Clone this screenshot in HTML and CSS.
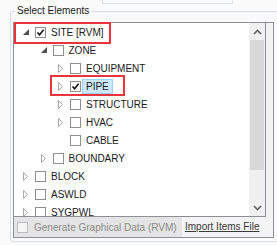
FILE: index.html
```html
<!DOCTYPE html>
<html lang="en">
<head>
    <meta charset="UTF-8">
    <meta name="viewport" content="width=device-width, initial-scale=1.0">
    <title>Select Elements</title>
    <link rel="stylesheet" href="styles.css">
</head>
<body>
    <div class="top-field"></div>

    <fieldset class="group">
        <legend>Select Elements</legend>
        <div class="panel">
            <div class="tree">
                <ul class="nodes">
                    <li class="node lvl-0">
                        <span class="exp"><svg width="6" height="6" viewBox="0 0 6 6"><path d="M6 0V6H0Z" fill="#505050"/></svg></span>
                        <span class="chk"><svg width="9" height="9" viewBox="0 0 9 9"><path d="M1.5 4.5L3.6 6.8L7.6 1.8" fill="none" stroke="#111" stroke-width="1.6"/></svg></span>
                        <span class="label">SITE [RVM]</span>
                    </li>
                    <li class="node lvl-1">
                        <span class="exp"><svg width="6" height="6" viewBox="0 0 6 6"><path d="M6 0V6H0Z" fill="#505050"/></svg></span>
                        <span class="chk"></span>
                        <span class="label">ZONE</span>
                    </li>
                    <li class="node lvl-2">
                        <span class="exp"><svg width="5" height="9" viewBox="0 0 5 9"><path d="M0.5 0.5L4.5 4.5L0.5 8.5Z" fill="none" stroke="#a8a8a8"/></svg></span>
                        <span class="chk"></span>
                        <span class="label">EQUIPMENT</span>
                    </li>
                    <li class="node lvl-2">
                        <span class="exp"><svg width="5" height="9" viewBox="0 0 5 9"><path d="M0.5 0.5L4.5 4.5L0.5 8.5Z" fill="none" stroke="#a8a8a8"/></svg></span>
                        <span class="chk"><svg width="9" height="9" viewBox="0 0 9 9"><path d="M1.5 4.5L3.6 6.8L7.6 1.8" fill="none" stroke="#111" stroke-width="1.6"/></svg></span>
                        <span class="label selected">PIPE</span>
                    </li>
                    <li class="node lvl-2">
                        <span class="exp"><svg width="5" height="9" viewBox="0 0 5 9"><path d="M0.5 0.5L4.5 4.5L0.5 8.5Z" fill="none" stroke="#a8a8a8"/></svg></span>
                        <span class="chk"></span>
                        <span class="label">STRUCTURE</span>
                    </li>
                    <li class="node lvl-2">
                        <span class="exp"><svg width="5" height="9" viewBox="0 0 5 9"><path d="M0.5 0.5L4.5 4.5L0.5 8.5Z" fill="none" stroke="#a8a8a8"/></svg></span>
                        <span class="chk"></span>
                        <span class="label">HVAC</span>
                    </li>
                    <li class="node lvl-2">
                        <span class="exp"></span>
                        <span class="chk"></span>
                        <span class="label">CABLE</span>
                    </li>
                    <li class="node lvl-1">
                        <span class="exp"><svg width="5" height="9" viewBox="0 0 5 9"><path d="M0.5 0.5L4.5 4.5L0.5 8.5Z" fill="none" stroke="#a8a8a8"/></svg></span>
                        <span class="chk"></span>
                        <span class="label">BOUNDARY</span>
                    </li>
                    <li class="node lvl-0">
                        <span class="exp"><svg width="5" height="9" viewBox="0 0 5 9"><path d="M0.5 0.5L4.5 4.5L0.5 8.5Z" fill="none" stroke="#a8a8a8"/></svg></span>
                        <span class="chk"></span>
                        <span class="label">BLOCK</span>
                    </li>
                    <li class="node lvl-0">
                        <span class="exp"><svg width="5" height="9" viewBox="0 0 5 9"><path d="M0.5 0.5L4.5 4.5L0.5 8.5Z" fill="none" stroke="#a8a8a8"/></svg></span>
                        <span class="chk"></span>
                        <span class="label">ASWLD</span>
                    </li>
                    <li class="node lvl-0">
                        <span class="exp"><svg width="5" height="9" viewBox="0 0 5 9"><path d="M0.5 0.5L4.5 4.5L0.5 8.5Z" fill="none" stroke="#a8a8a8"/></svg></span>
                        <span class="chk"></span>
                        <span class="label">SYGPWL</span>
                    </li>
                </ul>
                <div class="scrollbar">
                    <div class="sb-btn"><svg width="9" height="6" viewBox="0 0 9 6"><path d="M1 5L4.5 1.5L8 5" fill="none" stroke="#606060" stroke-width="1.6"/></svg></div>
                    <div class="sb-track"><div class="sb-thumb"></div></div>
                    <div class="sb-btn"><svg width="9" height="6" viewBox="0 0 9 6"><path d="M1 1L4.5 4.5L8 1" fill="none" stroke="#606060" stroke-width="1.6"/></svg></div>
                </div>
            </div>

            <div class="footer">
                <label class="gen"><span class="chk disabled"></span>Generate Graphical Data (RVM)</label>
                <a class="import">Import Items File</a>
            </div>

            <div class="mark mark-site"></div>
            <div class="mark mark-pipe"></div>
        </div>
    </fieldset>
</body>
</html>
```

FILE: styles.css
```css
html, body {
    overflow: hidden;
}

body {
    font-family: 'Liberation Sans', Arial, sans-serif;
    font-size: 10px;
    color: #1a1a1a;
    margin: 0;
    padding: 0;
    background-color: #fafafa;
}

.top-field {
    margin-left: 102px;
    width: 131px;
    height: 4px;
    border: 1px solid #dde2e7;
    border-top: none;
    box-sizing: border-box;
}

.group {
    margin: 1px -6px 0 10px;
    padding: 5px 2px 3px 2px;
    border: 1px solid #d8dde2;
    border-radius: 3px;
    min-width: 0;
}

.group legend {
    margin-left: 2px;
    padding: 0 2px;
    line-height: 12px;
    height: 12px;
}

.panel {
    position: relative;
    width: 261px;
    box-sizing: border-box;
    border: 1px solid #8e8f94;
    background: #f3f3f3;
}

.tree {
    display: flex;
    width: 252px;
    height: 194px;
    box-sizing: border-box;
    border-right: 1px solid #8e8f94;
    border-bottom: 1px solid #8e8f94;
    background: #fff;
}

.nodes {
    flex: 1;
    list-style: none;
    margin: 0;
    padding: 0;
    overflow: hidden;
}

.node {
    display: flex;
    align-items: center;
    height: 18px;
}

.lvl-0 { padding-left: 6px; }
.lvl-1 { padding-left: 23.5px; }
.lvl-2 { padding-left: 41px; }

.exp {
    display: flex;
    align-items: center;
    width: 12px;
    height: 18px;
    padding-left: 3px;
    box-sizing: border-box;
}

.exp svg {
    display: block;
}

.chk {
    display: flex;
    align-items: center;
    justify-content: center;
    width: 11px;
    height: 11px;
    margin-left: 3px;
    box-sizing: border-box;
    border: 1px solid #8f8f8f;
    background: #fff;
}

.label {
    margin-left: 1px;
    padding: 0 3px;
    height: 15px;
    line-height: 13px;
    box-sizing: border-box;
    border: 1px solid transparent;
    white-space: nowrap;
}

.label.selected {
    background: #cde8fc;
    border-color: #9fd2f5;
}

.scrollbar {
    display: flex;
    flex-direction: column;
    width: 16px;
    background: #f0f0f0;
}

.sb-btn {
    display: flex;
    align-items: center;
    justify-content: center;
    height: 17px;
}

.sb-track {
    flex: 1;
}

.sb-thumb {
    margin: 0 1px;
    height: 130px;
    background: #d8d8d8;
}

.footer {
    display: flex;
    align-items: stretch;
    height: 20px;
}

.gen {
    display: flex;
    align-items: center;
    width: 168px;
    padding-left: 3px;
    box-sizing: border-box;
    background: #e4e4e4;
    color: #8c8c8c;
}

.gen .chk {
    margin: 0 6px 0 0;
    border-color: #bdbdbd;
    background: #f4f4f4;
}

.import {
    align-self: center;
    margin-left: 3px;
    color: #3a3a3a;
    text-decoration: underline;
    margin-top: -2px;
}

.mark {
    position: absolute;
    border: 2px solid #e8343d;
    box-sizing: border-box;
}

.mark-site {
    left: 0;
    top: -1px;
    width: 97px;
    height: 22px;
}

.mark-pipe {
    left: 36px;
    top: 52px;
    width: 75px;
    height: 21px;
}
```
